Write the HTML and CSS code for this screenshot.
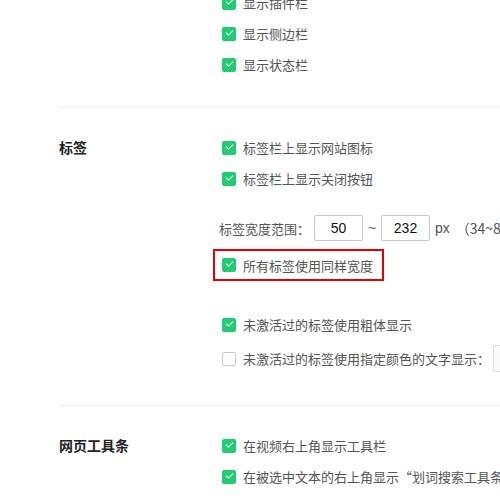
FILE: index.html
```html
<!DOCTYPE html>
<html lang="zh-CN">

<head>
    <meta charset="UTF-8">
    <meta name="viewport" content="width=device-width, initial-scale=1.0">
    <title>设置 - 界面</title>
    <link rel="stylesheet" href="styles.css">
</head>

<body>
    <div class="settings">
        <!-- 界面 -->
        <div class="section section-top">
            <div class="section-title"></div>
            <div class="options">
                <label class="option"><span class="check on"></span>显示插件栏</label>
                <label class="option"><span class="check on"></span>显示侧边栏</label>
                <label class="option"><span class="check on"></span>显示状态栏</label>
            </div>
        </div>

        <!-- 标签 -->
        <div class="section">
            <div class="section-title">标签</div>
            <div class="options">
                <label class="option"><span class="check on"></span>标签栏上显示网站图标</label>
                <label class="option"><span class="check on"></span>标签栏上显示关闭按钮</label>
                <div class="range-row">
                    <span class="range-label">标签宽度范围：</span>
                    <span class="num-input">50</span>
                    <span class="tilde">~</span>
                    <span class="num-input">232</span>
                    <span class="unit">px</span>
                    <span class="hint">（34~80）</span>
                </div>
                <label class="option highlight"><span class="check on"></span>所有标签使用同样宽度</label>
                <label class="option option-gap"><span class="check on"></span>未激活过的标签使用粗体显示</label>
                <label class="option option-color"><span class="check"></span>未激活过的标签使用指定颜色的文字显示：<span class="color-box"></span></label>
            </div>
        </div>

        <!-- 网页工具条 -->
        <div class="section">
            <div class="section-title">网页工具条</div>
            <div class="options">
                <label class="option"><span class="check on"></span>在视频右上角显示工具栏</label>
                <label class="option"><span class="check on"></span>在被选中文本的右上角显示“划词搜索工具条”</label>
            </div>
        </div>
    </div>
</body>

</html>
```

FILE: styles.css
```css
/* 基础样式 */
html, body {
    margin: 0;
    padding: 0;
    background: #fff;
    overflow: hidden;
}

body {
    font-family: "Microsoft YaHei", "Noto Sans CJK SC", "Noto Sans", sans-serif;
    font-size: 13px;
    color: #555;
}

.settings {
    margin-top: -13px;
    padding-left: 59px;
    white-space: nowrap;
}

/* 每个设置分组 */
.section {
    display: flex;
    align-items: flex-start;
    border-top: 1px solid #eeeeee;
    padding-top: 24px;
    padding-bottom: 31px;
}

.section-top {
    border-top: none;
    padding-top: 0;
    padding-bottom: 27px;
}

.section-title {
    width: 163px;
    flex-shrink: 0;
    height: 31px;
    line-height: 30px;
    font-size: 14px;
    font-weight: bold;
    color: #222;
}

.options {
    display: flex;
    flex-direction: column;
    align-items: flex-start;
}

.option {
    display: flex;
    align-items: center;
    height: 31px;
    gap: 7px;
}

/* 复选框 */
.check {
    width: 14px;
    height: 14px;
    box-sizing: border-box;
    border: 1px solid #c9c9c9;
    border-radius: 2px;
    background: #fff;
    flex-shrink: 0;
    position: relative;
}

.check.on {
    border-color: #20cd72;
    background: #20cd72;
}

/* 勾 */
.check.on::after {
    content: "";
    position: absolute;
    left: 3px;
    top: 2px;
    width: 6px;
    height: 3px;
    border-left: 1.5px solid #fff;
    border-bottom: 1.5px solid #fff;
    transform: rotate(-45deg);
}

/* 标签宽度范围 */
.range-row {
    display: flex;
    align-items: center;
    height: 26px;
    margin-top: 21px;
    margin-left: -3px;
}

.range-label {
    margin-right: 4px;
}

.num-input {
    width: 49px;
    height: 26px;
    box-sizing: border-box;
    border: 1px solid #c8c8c8;
    border-radius: 2px;
    text-align: center;
    line-height: 24px;
    font-family: "Liberation Sans", Arial, sans-serif;
    font-size: 14px;
    color: #111;
}

.tilde {
    width: 18px;
    text-align: center;
    font-family: "Liberation Sans", Arial, sans-serif;
    font-size: 14px;
}

.unit {
    margin-left: 5px;
    font-family: "Liberation Sans", Arial, sans-serif;
    font-size: 14px;
}

.hint {
    margin-left: 6px;
    font-size: 14px;
}

/* 红框标注 */
.highlight {
    height: 28px;
    margin-top: 8px;
    margin-left: -9px;
    padding: 0 9px 0 7px;
    border: 2px solid #e60000;
}

.option-gap {
    margin-top: 28px;
}

.option-color {
    margin-top: 3px;
}

.color-box {
    flex-shrink: 0;
    width: 20px;
    height: 27px;
    box-sizing: border-box;
    margin-left: -4px;
    border: 1px solid #dcdcdc;
    border-radius: 2px;
    background: #fbfbfb;
}
```
